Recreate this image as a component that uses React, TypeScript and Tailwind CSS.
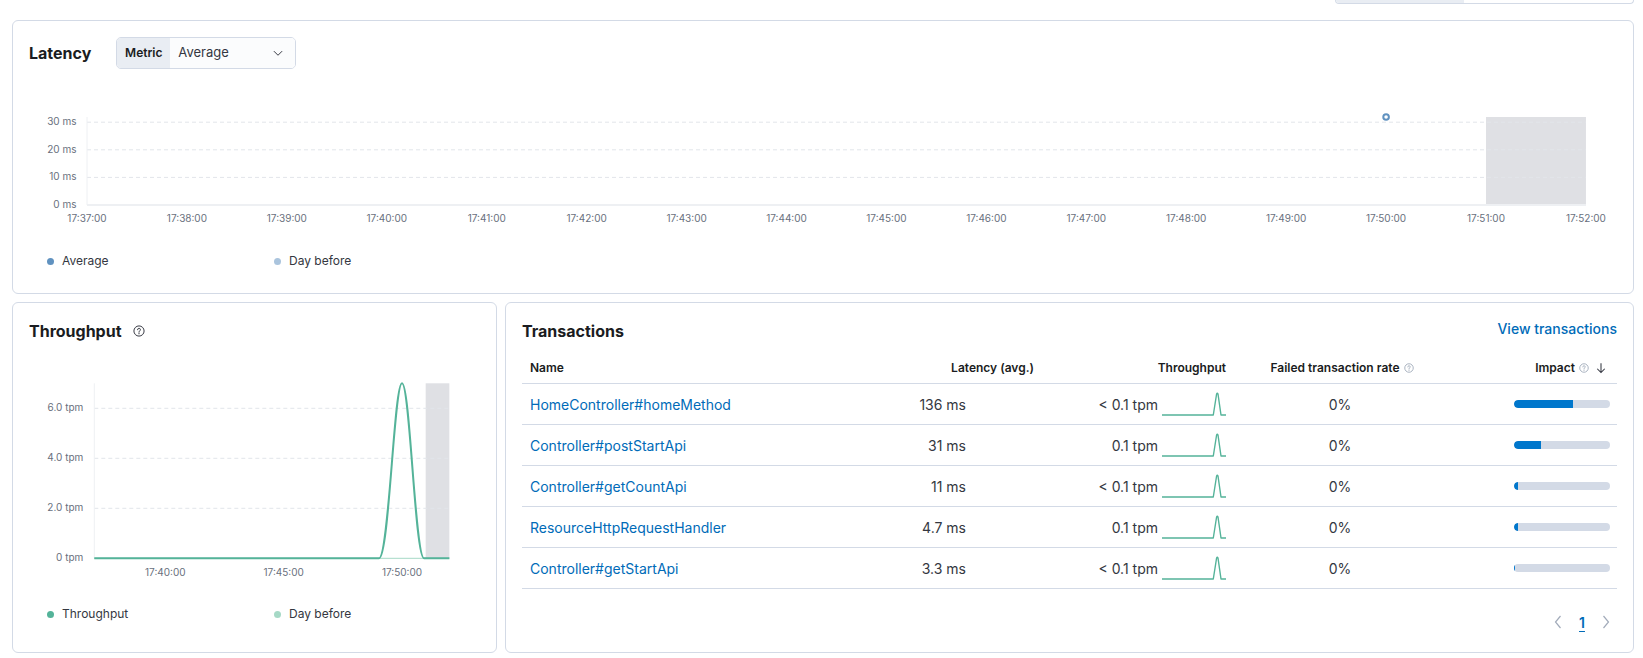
import React from 'react';

const latencyTicks = [
  '17:37:00', '17:38:00', '17:39:00', '17:40:00', '17:41:00', '17:42:00', '17:43:00', '17:44:00',
  '17:45:00', '17:46:00', '17:47:00', '17:48:00', '17:49:00', '17:50:00', '17:51:00', '17:52:00',
];

const transactions = [
  { name: 'HomeController#homeMethod', latency: '136 ms', tpm: '< 0.1 tpm', failed: '0%', impact: 61 },
  { name: 'Controller#postStartApi', latency: '31 ms', tpm: '0.1 tpm', failed: '0%', impact: 28 },
  { name: 'Controller#getCountApi', latency: '11 ms', tpm: '< 0.1 tpm', failed: '0%', impact: 4.5 },
  { name: 'ResourceHttpRequestHandler', latency: '4.7 ms', tpm: '0.1 tpm', failed: '0%', impact: 4 },
  { name: 'Controller#getStartApi', latency: '3.3 ms', tpm: '< 0.1 tpm', failed: '0%', impact: 1.5 },
];

const QuestionIcon = ({ size = 12, color = '#343741' }: { size?: number; color?: string }) => (
  <svg width={size} height={size} viewBox="0 0 16 16" fill="none">
    <circle cx="8" cy="8" r="6.8" stroke={color} strokeWidth="1.3" />
    <path d="M6.1 6.3a1.9 1.9 0 1 1 2.6 1.75c-.45.2-.7.55-.7 1.05v.55" stroke={color} strokeWidth="1.3" strokeLinecap="round" />
    <circle cx="8" cy="11.6" r=".85" fill={color} />
  </svg>
);

const Legend = ({ a, b, colorA, colorB }: { a: string; b: string; colorA: string; colorB: string }) => (
  <div className="flex pl-[34px] h-[18px] items-center text-[12px] text-[#343741]">
    <div className="w-[227px] flex items-center gap-[8px]">
      <span className="w-[7px] h-[7px] rounded-full" style={{ background: colorA }} />
      <span>{a}</span>
    </div>
    <div className="flex items-center gap-[8px]">
      <span className="w-[7px] h-[7px] rounded-full" style={{ background: colorB }} />
      <span>{b}</span>
    </div>
  </div>
);

const LatencyChart = () => {
  const x0 = 74;
  const step = 99.93;
  const y = (ms: number) => 136 - ms * 2.76;
  return (
    <svg width="1620" height="171" className="block" fontFamily="Inter, sans-serif">
      <rect x={x0 + 14 * step} y="48" width={step} height="88" fill="#dfe0e4" />
      {[10, 20, 30].map((v) => (
        <line key={v} x1={x0} x2={x0 + 15 * step} y1={y(v)} y2={y(v)} stroke="#e2e5ea" strokeDasharray="4 3" />
      ))}
      <line x1={x0} x2={x0} y1="48" y2="136" stroke="#eef0f3" />
      <line x1={x0} x2={x0 + 15 * step} y1="136" y2="136" stroke="#eef0f3" strokeWidth="2" />
      {[0, 10, 20, 30].map((v) => (
        <text key={v} x="63.5" y={y(v)} textAnchor="end" dominantBaseline="middle" fontSize="10" fill="#69707d">
          {v} ms
        </text>
      ))}
      {latencyTicks.map((t, i) => (
        <text key={t} x={x0 + i * step} y="150" textAnchor="middle" dominantBaseline="middle" fontSize="10" fill="#69707d">
          {t}
        </text>
      ))}
      <circle cx={x0 + 13 * step} cy="48" r="2.8" fill="#fff" stroke="#6092c0" strokeWidth="2" />
    </svg>
  );
};

const ThroughputChart = () => {
  const x0 = 81.3;
  const step = 23.67;
  const y = (v: number) => 215.3 - v * 25;
  const xEnd = x0 + 15 * step;
  const px = x0 + 13 * step;
  return (
    <svg width="483" height="247" className="block" fontFamily="Inter, sans-serif">
      <rect x={x0 + 14 * step} y="40.3" width={step} height="175" fill="#dfe0e4" />
      {[2, 4, 6].map((v) => (
        <line key={v} x1={x0} x2={xEnd} y1={y(v)} y2={y(v)} stroke="#e2e5ea" strokeDasharray="4 3" />
      ))}
      <line x1={x0} x2={x0} y1="40.3" y2="215.3" stroke="#eef0f3" />
      {[0, 2, 4, 6].map((v) => (
        <text key={v} x="70.3" y={y(v)} textAnchor="end" dominantBaseline="middle" fontSize="10" fill="#69707d">
          {v === 0 ? '0 tpm' : `${v}.0 tpm`}
        </text>
      ))}
      {[['17:40:00', 3], ['17:45:00', 8], ['17:50:00', 13]].map(([t, i]) => (
        <text key={t as string} x={x0 + (i as number) * step} y="230.3" textAnchor="middle" dominantBaseline="middle" fontSize="10" fill="#69707d">
          {t}
        </text>
      ))}
      <line x1={x0} x2={xEnd} y1="215.3" y2="215.3" stroke="#a6d9c6" strokeWidth="1" />
      <path
        d={`M${x0} 215.3 H${px - 23} C${px - 13} 215.3 ${px - 8} 40.3 ${px} 40.3 C${px + 8} 40.3 ${px + 13} 215.3 ${px + 22} 215.3 H${xEnd}`}
        fill="none"
        stroke="#54b399"
        strokeWidth="2"
      />
    </svg>
  );
};

const Sparkline = () => (
  <svg width="64" height="24" viewBox="0 0 64 24" fill="none">
    <path d="M0 23H51.3L54.6 2Q55.3 0.6 56 2L59 23H64" stroke="#54b399" strokeWidth="1.4" strokeLinejoin="round" />
  </svg>
);

const SortDown = () => (
  <svg width="12" height="12" viewBox="0 0 16 16" fill="none">
    <path d="M8 1.5V14M3 9l5 5 5-5" stroke="#343741" strokeWidth="1.4" />
  </svg>
);

export default function App() {
  return (
    <div className="w-[1643px] h-[658px] bg-white overflow-hidden font-['Inter',_sans-serif] text-[#343741]">
      <div className="h-[20px] flex justify-end pr-[9px]">
        <div className="w-[299px] h-[4px] flex border border-t-0 border-[#d3dae6] rounded-b-[6px] overflow-hidden">
          <div className="w-[128px] bg-[#e9edf3]" />
        </div>
      </div>

      <div className="ml-[12px] w-[1622px] h-[274px] border border-[#d3dae6] rounded-[6px] pt-[16px]">
        <div className="px-[16px] flex items-center gap-[25px] h-[32px]">
          <h2 className="text-[16px] font-bold leading-[24px] text-[#1a1c21]">Latency</h2>
          <div className="flex h-[32px] w-[180px] rounded-[5px] border border-[#d3dae6] overflow-hidden">
            <div className="w-[53px] bg-[#e9edf3] flex items-center justify-center text-[12px] font-semibold text-[#1a1c21]">
              Metric
            </div>
            <div className="flex-1 flex items-center justify-between pl-[8px] pr-[11px] bg-[#fbfcfd] text-[13px] text-[#343741]">
              <span>Average</span>
              <svg width="12" height="12" viewBox="0 0 16 16" fill="none">
                <path d="M2.5 5.5 8 11l5.5-5.5" stroke="#343741" strokeWidth="1.3" />
              </svg>
            </div>
          </div>
        </div>
        <LatencyChart />
        <div className="mt-[12px]">
          <Legend a="Average" b="Day before" colorA="#6092c0" colorB="#aac4dd" />
        </div>
      </div>

      <div className="mt-[8px] ml-[12px] flex gap-[8px]">
        <div className="w-[485px] h-[351px] border border-[#d3dae6] rounded-[6px] pt-[16px]">
          <div className="px-[16px] h-[24px] flex items-center gap-[11px]">
            <h2 className="text-[16px] font-bold leading-[24px] text-[#1a1c21]">Throughput</h2>
            <QuestionIcon size={12} color="#343741" />
          </div>
          <ThroughputChart />
          <div className="mt-[15px]">
            <Legend a="Throughput" b="Day before" colorA="#54b399" colorB="#a6d9c6" />
          </div>
        </div>

        <div className="w-[1129px] h-[351px] border border-[#d3dae6] rounded-[6px] p-[16px]">
          <div className="h-[24px] flex items-start justify-between">
            <h2 className="text-[16px] font-bold leading-[24px] text-[#1a1c21]">Transactions</h2>
            <a href="#" className="text-[14px] font-medium leading-[20px] text-[#006bb8]">View transactions</a>
          </div>

          <div className="mt-[9px]">
            <div className="flex h-[32px] items-center border-b border-[#d3dae6] text-[12px] font-semibold text-[#1a1c21]">
              <div className="w-[400px] pl-[8px]">Name</div>
              <div className="w-[120px] pr-[8px] text-right">Latency (avg.)</div>
              <div className="w-[192px] pr-[8px] text-right">Throughput</div>
              <div className="w-[216px] flex items-center justify-center gap-[4px]">
                <span>Failed transaction rate</span>
                <QuestionIcon size={10} color="#98a2b3" />
              </div>
              <div className="w-[167px] pr-[10px] flex items-center justify-end">
                <span>Impact</span>
                <span className="ml-[4px]"><QuestionIcon size={10} color="#98a2b3" /></span>
                <span className="ml-[6px]"><SortDown /></span>
              </div>
            </div>

            {transactions.map((t) => (
              <div key={t.name} className="flex h-[41px] items-center border-b border-[#d3dae6] text-[14px] whitespace-nowrap">
                <div className="w-[400px] pl-[8px]">
                  <a href="#" className="text-[#006bb8]">{t.name}</a>
                </div>
                <div className="w-[120px] pr-[76px] flex justify-end">{t.latency}</div>
                <div className="w-[192px] pr-[8px] flex items-center justify-end gap-[4px]">
                  <span>{t.tpm}</span>
                  <Sparkline />
                </div>
                <div className="w-[216px] text-center pr-[4px]">{t.failed}</div>
                <div className="w-[167px] pr-[7px] flex justify-end">
                  <div className="w-[96px] h-[8px] rounded-full bg-[#d3dae6] overflow-hidden">
                    <div className="h-full bg-[#0077cc] rounded-l-full" style={{ width: `${t.impact}%` }} />
                  </div>
                </div>
              </div>
            ))}
          </div>

          <div className="mt-[23px] h-[20px] flex justify-end items-center gap-[4px] pr-[1px]">
            <span className="w-[20px] flex justify-center">
              <svg width="8" height="14" viewBox="0 0 8 14" fill="none">
                <path d="M6.5 1 1.5 7l5 6" stroke="#a2abba" strokeWidth="1.2" />
              </svg>
            </span>
            <span className="w-[20px] text-center text-[14px] font-semibold text-[#006bb8] underline underline-offset-[3px]">1</span>
            <span className="w-[20px] flex justify-center">
              <svg width="8" height="14" viewBox="0 0 8 14" fill="none">
                <path d="M1.5 1l5 6-5 6" stroke="#a2abba" strokeWidth="1.2" />
              </svg>
            </span>
          </div>
        </div>
      </div>
    </div>
  );
}
